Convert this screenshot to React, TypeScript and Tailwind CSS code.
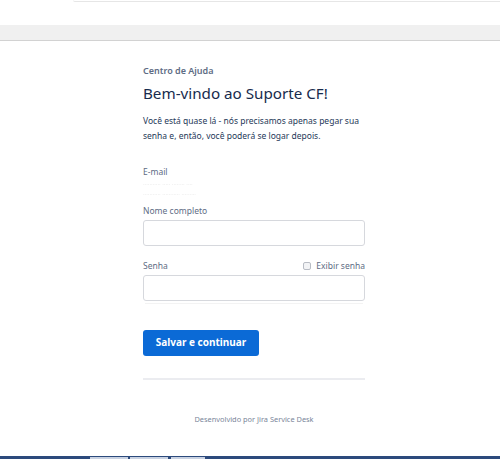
import React from "react";

export default function App() {
  const font = { fontFamily: '"Segoe UI", "Noto Sans", "Open Sans", Arial, sans-serif' };
  return (
    <div className="w-[500px] h-[459px] bg-white flex flex-col overflow-hidden relative" style={font}>
      {/* top browser area */}
      <div className="h-[25px] relative">
        <div className="absolute left-[73px] right-0 top-0 h-[2px] border-b border-[#e6e6e6] rounded-bl-[3px]" />
      </div>
      <div className="h-[16px] bg-[#f0f0f0] border-b border-[#d2d2d2]" />
      {/* content */}
      <div className="flex-1 flex justify-center">
        <div className="w-[222px] ml-[8px] flex flex-col pt-[24px]">
          <div className="text-[9px] font-semibold text-[#5e6c84] leading-[12px]">Centro de Ajuda</div>
          <h1 className="mt-[5px] text-[15.2px] text-[#172b4d] leading-[22px]">Bem-vindo ao Suporte CF!</h1>
          <p className="mt-[9px] text-[8.5px] text-[#253858] leading-[15px]">
            Você está quase lá - nós precisamos apenas pegar sua senha e, então, você poderá se logar depois.
          </p>
          <div className="mt-[23px] text-[8.5px] text-[#5e6c84] leading-[12px]">E-mail</div>
          <div className="mt-[1px] h-[20px] w-[115px] text-[6px] text-[#e2e2e2] leading-[10px] blur-[0.5px]">
            <div>··········· ····· ········ ····</div>
            <div>··········· ··········· ·········</div>
          </div>
          <div className="mt-[6px] text-[8.5px] text-[#5e6c84] leading-[12px]">Nome completo</div>
          <div className="mt-[3px] h-[26px] border border-[#d6d8dd] rounded-[3px] bg-white" />
          <div className="mt-[14px] flex items-center justify-between leading-[12px]">
            <span className="text-[8.5px] text-[#5e6c84]">Senha</span>
            <span className="flex items-center gap-[5px] text-[8.5px] text-[#5e6c84]">
              <span className="inline-block w-[8px] h-[8px] border border-[#b8bcc4] rounded-[2px] bg-[#f2f3f5]" />
              Exibir senha
            </span>
          </div>
          <div className="mt-[3px] h-[26px] border border-[#d6d8dd] rounded-[3px] bg-white" />
          <div className="mt-[2px] h-[1px] bg-[#f3f3f3] mx-[2px]" />
          <div className="mt-[24px]">
            <button className="h-[26px] w-[116px] bg-[#0b6ad6] rounded-[3px] text-white text-[10px] font-bold">
              Salvar e continuar
            </button>
          </div>
          <div className="mt-[22px] h-[2px] bg-[#ebecf0]" />
          <div className="mt-[34px] text-center text-[7.4px] text-[#7a869a] leading-[10px]">
            Desenvolvido por Jira Service Desk
          </div>
        </div>
      </div>
      {/* taskbar */}
      <div className="h-[3px] bg-[#2c4a7c] flex items-end">
        <div className="ml-[90px] w-[38px] h-[2px] bg-[#c9d2e2]" />
        <div className="ml-[2px] w-[38px] h-[2px] bg-[#c9d2e2]" />
        <div className="ml-[3px] w-[34px] h-[2px] bg-[#c9d2e2]" />
      </div>
    </div>
  );
}
